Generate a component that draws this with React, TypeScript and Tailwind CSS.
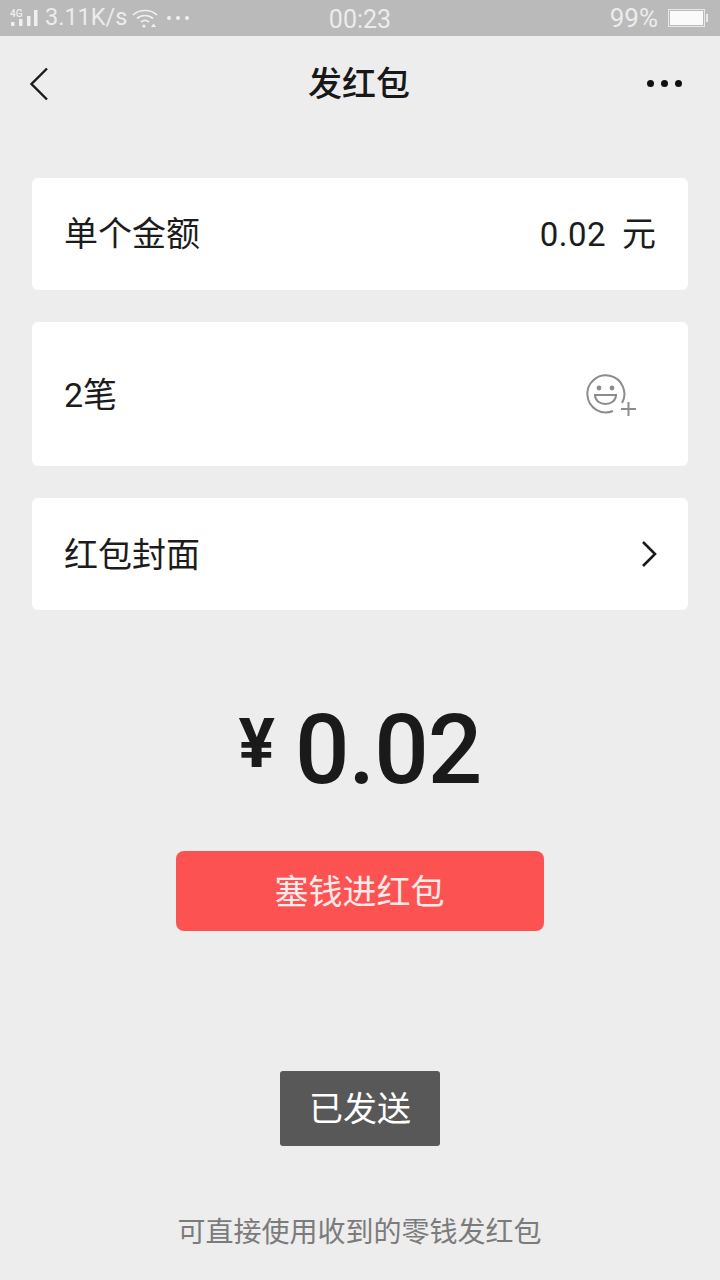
const cjk = "font-['Roboto','Noto_Sans_CJK_SC',sans-serif]";

function Signal() {
  return (
    <svg width="28" height="20" viewBox="0 0 28 20" className="shrink-0">
      <text x="0" y="9" fontSize="10" fontWeight="500" fill="#f0f0f0" fontFamily="Roboto, sans-serif">4G</text>
      <rect x="1" y="14" width="3.5" height="4" fill="#f0f0f0" />
      <rect x="9" y="11" width="3.5" height="7" fill="#f0f0f0" />
      <rect x="17" y="8" width="3.5" height="10" fill="#f0f0f0" />
      <rect x="24" y="2" width="3.5" height="16" fill="#f0f0f0" />
    </svg>
  );
}

function Wifi() {
  return (
    <svg width="26" height="20" viewBox="0 0 26 20" fill="none" stroke="#f0f0f0" strokeWidth="1.7" className="shrink-0">
      <path d="M1 7 C7 1 19 1 25 7" />
      <path d="M5 10.5 C9.5 6.5 16.5 6.5 21 10.5" />
      <path d="M9 14 C11.5 12 14.5 12 17 14" />
      <circle cx="12" cy="18" r="1.6" fill="#f0f0f0" stroke="none" />
      <path d="M19 19 L21.5 15.5 L24 19 Z" fill="#f0f0f0" stroke="none" />
    </svg>
  );
}

function Card({ h, children }: { h: string; children: React.ReactNode }) {
  return (
    <div className={`${h} flex items-center justify-between rounded-md bg-white pl-[32px] pr-[32px]`}>
      {children}
    </div>
  );
}

export default function App() {
  return (
    <div className={`flex h-[1280px] w-[720px] flex-col overflow-hidden bg-[#ededed] ${cjk}`}>
      <div className="relative flex h-9 items-center justify-between bg-[#bababa] pl-[10px] pr-[10px] text-[#ececec]">
        <div className="flex items-center">
          <Signal />
          <span className="ml-[7px] w-[82px] text-[23.5px] font-normal leading-none">3.11K/s</span>
          <span className="ml-[5px]"><Wifi /></span>
          <span className="ml-[9px] flex gap-[5px]">
            <i className="size-[4px] rounded-full bg-[#f0f0f0]" />
            <i className="size-[4px] rounded-full bg-[#f0f0f0]" />
            <i className="size-[4px] rounded-full bg-[#f0f0f0]" />
          </span>
        </div>
        <span className="absolute left-0 right-0 top-[7px] text-center text-[25px] font-normal leading-[26px]">00:23</span>
        <div className="flex items-center">
          <span className="text-[26px] font-normal leading-none">99%</span>
          <span className="ml-[10px] mr-[2px] flex items-center">
            <span className="flex h-[18px] w-[37px] items-center justify-center border border-[#e8e8e8] bg-[#bababa] p-[1px]">
              <span className="h-full w-full bg-[#fafafa]" />
            </span>
            <span className="ml-[1px] h-[8px] w-[2px] bg-[#e8e8e8]" />
          </span>
        </div>
      </div>

      <div className="relative flex h-[96px] items-center justify-between pb-[1px] pl-[29px] pr-[38px]">
        <svg width="20" height="34" viewBox="0 0 20 34" fill="none" stroke="#1a1a1a" strokeWidth="2.4">
          <path d="M18 1.5 L2.5 17 L18 32.5" />
        </svg>
        <span className="absolute left-0 right-[2px] top-[26px] text-center text-[34px] font-medium leading-[44px] text-[#181818]">发红包</span>
        <span className="flex gap-[7px]">
          <i className="size-[7px] rounded-full bg-[#111111]" />
          <i className="size-[7px] rounded-full bg-[#111111]" />
          <i className="size-[7px] rounded-full bg-[#111111]" />
        </span>
      </div>

      <div className="mt-[46px] flex flex-col gap-8 px-8 text-[34px] text-[#1c1c1c]">
        <Card h="h-[112px]">
          <span className="leading-none">单个金额</span>
          <span className="flex items-center leading-none">
            <span className="text-[33px] tracking-[0.5px]">0.02</span>
            <span className="ml-[16px]">元</span>
          </span>
        </Card>
        <Card h="h-[144px]">
          <span className="pt-[2px] leading-none">2笔</span>
          <svg width="54" height="42" viewBox="0 0 54 42" fill="none" stroke="#8c8c8c" strokeWidth="2" className="mr-[16px] mt-[1px]">
            <path d="M36 29 A18.5 18.5 0 1 0 27 37" />
            <circle cx="13" cy="14" r="2.4" fill="#8c8c8c" stroke="none" />
            <circle cx="26" cy="14" r="2.4" fill="#8c8c8c" stroke="none" />
            <path d="M9 21 H30 C30 33 9 33 9 21 Z" />
            <path d="M35 35 H50 M42.5 28 V42" />
          </svg>
        </Card>
        <Card h="h-[112px]">
          <span className="pt-[2px] leading-none">红包封面</span>
          <svg width="18" height="28" viewBox="0 0 18 28" fill="none" stroke="#1a1a1a" strokeWidth="2.6" className="mr-[-2px]">
            <path d="M3 2 L15 14 L3 26" />
          </svg>
        </Card>
      </div>

      <div className="mt-[84px] flex h-[110px] items-center justify-center pt-[1px] text-[#1a1a1a]">
        <span className="mb-[12px] mr-[20px] text-[68px] font-bold leading-none">¥</span>
        <span className="text-[96px] font-medium leading-none tracking-[-1px]">0.02</span>
      </div>

      <div className="mt-[47px] flex justify-center">
        <div className="flex h-[80px] w-[368px] items-center justify-center rounded-lg bg-[#fd5252] pr-[1px] pt-[2px] text-[34px] text-[#fdeaea]">
          塞钱进红包
        </div>
      </div>

      <div className="mt-[140px] flex justify-center">
        <div className="flex h-[75px] w-[160px] items-center justify-center rounded-[3px] bg-[#585858] pt-[2px] text-[34px] text-white">
          已发送
        </div>
      </div>

      <div className="mt-[67px] pr-[1px] text-center text-[28px] leading-[40px] text-[#7b7b7b]">可直接使用收到的零钱发红包</div>
    </div>
  );
}
